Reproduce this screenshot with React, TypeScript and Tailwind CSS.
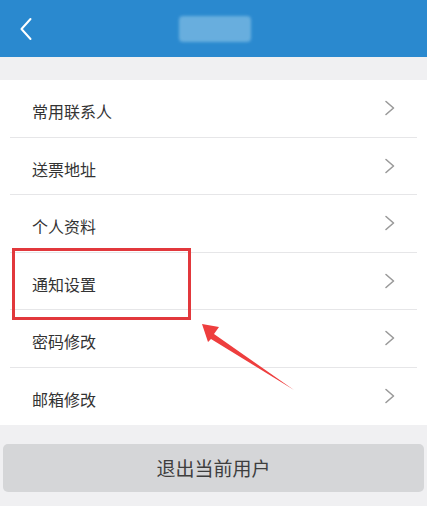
import React from "react";

const items = ["常用联系人", "送票地址", "个人资料", "通知设置", "密码修改", "邮箱修改"];

function Chevron() {
  return (
    <svg width="12" height="16" viewBox="0 0 12 16" fill="none">
      <path d="M2 1.5 L9.5 8 L2 14.5" stroke="#9a9a9a" strokeWidth="1.6" strokeLinecap="round" strokeLinejoin="round" />
    </svg>
  );
}

export default function App() {
  return (
    <div
      className="relative w-[427px] h-[506px] overflow-hidden bg-[#f0f0f2]"
      style={{ fontFamily: '"Noto Sans CJK SC", "Noto Sans", sans-serif' }}
    >
      <div className="h-[57px] bg-[#2a89cf] flex items-center relative">
        <div className="pl-[19px] pt-[1px]">
          <svg width="14" height="24" viewBox="0 0 14 24" fill="none">
            <path d="M11.5 2 L2.5 12 L11.5 22" stroke="#ffffff" strokeWidth="2" strokeLinecap="round" strokeLinejoin="round" />
          </svg>
        </div>
        <div className="absolute left-[179px] top-[16px] w-[72px] h-[26px] rounded-[4px] bg-[#6fb3e0] blur-[1.5px] opacity-90" />
      </div>
      <div className="h-[23px]" />
      <div className="bg-white">
        {items.map((t, i) => (
          <div key={t} className="px-[10px]">
            <div
              className={
                "h-[57.5px] flex items-center justify-between pl-[22px] pr-[21px] " +
                (i < items.length - 1 ? "border-b border-[#e6e6e8]" : "")
              }
            >
              <span className="text-[16px] text-[#333333] pt-[6px]">{t}</span>
              <Chevron />
            </div>
          </div>
        ))}
      </div>
      <div className="px-[3px] pt-[19px]">
        <div className="h-[48px] rounded-[5px] bg-[#d5d6d8] flex items-center justify-center">
          <span className="text-[19px] text-[#3e3e3e]">退出当前用户</span>
        </div>
      </div>

      <div className="absolute left-[12px] top-[248px] w-[179px] h-[72px] border-[3px] border-[#e2383c]" />
      <svg className="absolute left-0 top-0" width="427" height="506" viewBox="0 0 427 506">
        <polygon points="202,324 219,327 214,334 294,390 211,339 208,342" fill="#ee3e3e" />
      </svg>
    </div>
  );
}
